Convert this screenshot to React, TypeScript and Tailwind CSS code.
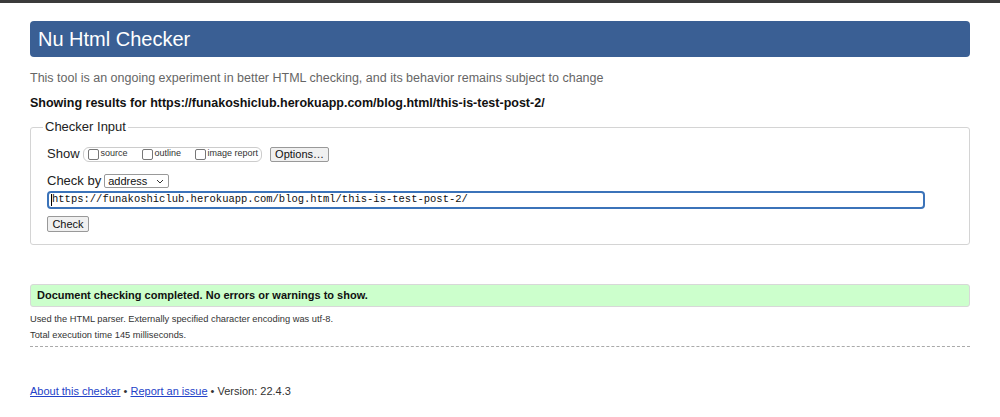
export default function App() {
  const url = "https://funakoshiclub.herokuapp.com/blog.html/this-is-test-post-2/";
  return (
    <div className="min-h-[417px] bg-white font-['Liberation_Sans',Arial,sans-serif] text-[#222]">
      <div className="h-[3px] bg-[#3b3b3b]" />
      <div className="px-[30px]">
        <h1 className="mt-[18px] h-[36px] rounded-[4px] bg-[#3a5f94] pl-[8px] flex items-center text-[20px] font-normal text-white">
          Nu Html Checker
        </h1>
        <p className="mt-[13px] text-[12.5px] leading-[16px] text-[#666]">
          This tool is an ongoing experiment in better HTML checking, and its behavior remains subject to change
        </p>
        <p className="mt-[9px] text-[12.5px] leading-[16px] font-bold text-[#111]">
          Showing results for {url}
        </p>

        <fieldset className="mt-[8px] border border-[#d4d4d4] rounded-[3px] pl-[16px] pr-[16px] pb-[9px]">
          <legend className="-ml-[4px] px-[2px] text-[13px] leading-[16px] text-[#222]">Checker Input</legend>

          <div className="mt-[11px] flex items-center h-[16px]">
            <span className="text-[13px] mr-[3px]">Show</span>
            <div className="flex items-center h-[15px] border border-[#ccc] rounded-[6px] pl-[4px] pr-[3px] whitespace-nowrap">
              <label className="flex items-center text-[9px] text-[#333] w-[54px]">
                <span className="shrink-0 w-[11px] h-[11px] border border-[#777] rounded-[2px] bg-white mr-[2px]" />
                source
              </label>
              <label className="flex items-center text-[9px] text-[#333] w-[53px]">
                <span className="shrink-0 w-[11px] h-[11px] border border-[#777] rounded-[2px] bg-white mr-[2px]" />
                outline
              </label>
              <label className="flex items-center text-[9px] text-[#333]">
                <span className="shrink-0 w-[11px] h-[11px] border border-[#777] rounded-[2px] bg-white mr-[2px]" />
                image report
              </label>
            </div>
            <button className="ml-[8px] h-[15px] w-[59px] text-[11px] leading-[13px] border border-[#999] rounded-[2px] bg-[#f0f0f0] text-[#111]">
              Options…
            </button>
          </div>

          <div className="mt-[11px] flex items-center h-[16px]">
            <span className="text-[13px] mr-[3px]">Check by</span>
            <div className="flex items-center justify-between w-[65px] h-[14px] border border-[#999] rounded-[2px] bg-white pl-[3px] pr-[4px] text-[11px] text-[#111]">
              <span>address</span>
              <svg width="8" height="5" viewBox="0 0 8 5" fill="none">
                <path d="M1 1l3 3 3-3" stroke="#333" strokeWidth="1" />
              </svg>
            </div>
          </div>

          <div className="mt-[2px] w-[878px] h-[18px] border-2 border-[#3b73b9] rounded-[4px] flex items-center pl-[2px] font-['Liberation_Mono',monospace] text-[10.5px] text-[#111]">
            <span className="w-px h-[12px] bg-black" />
            {url}
          </div>

          <button className="mt-[7px] h-[16px] w-[42px] text-[11px] leading-[14px] border border-[#999] rounded-[2px] bg-[#f0f0f0] text-[#111]">
            Check
          </button>
        </fieldset>

        <div className="mt-[39px] h-[23px] border border-[#d8d8d8] rounded-[3px] bg-[#ccffcc] flex items-center pl-[6px] text-[11px] font-bold text-[#111]">
          Document checking completed. No errors or warnings to show.
        </div>
        <p className="mt-[6px] text-[9.3px] leading-[12px] text-[#333]">
          Used the HTML parser. Externally specified character encoding was utf-8.
        </p>
        <p className="mt-[4px] text-[9.3px] leading-[12px] text-[#333]">Total execution time 145 milliseconds.</p>
        <div className="mt-[5px] border-t border-dashed border-[#aaa]" />

        <p className="mt-[37px] text-[11px] leading-[14px] text-[#333]">
          <a className="text-[#2342c8] underline">About this checker</a> •{" "}
          <a className="text-[#2342c8] underline">Report an issue</a> • Version: 22.4.3
        </p>
      </div>
    </div>
  );
}
